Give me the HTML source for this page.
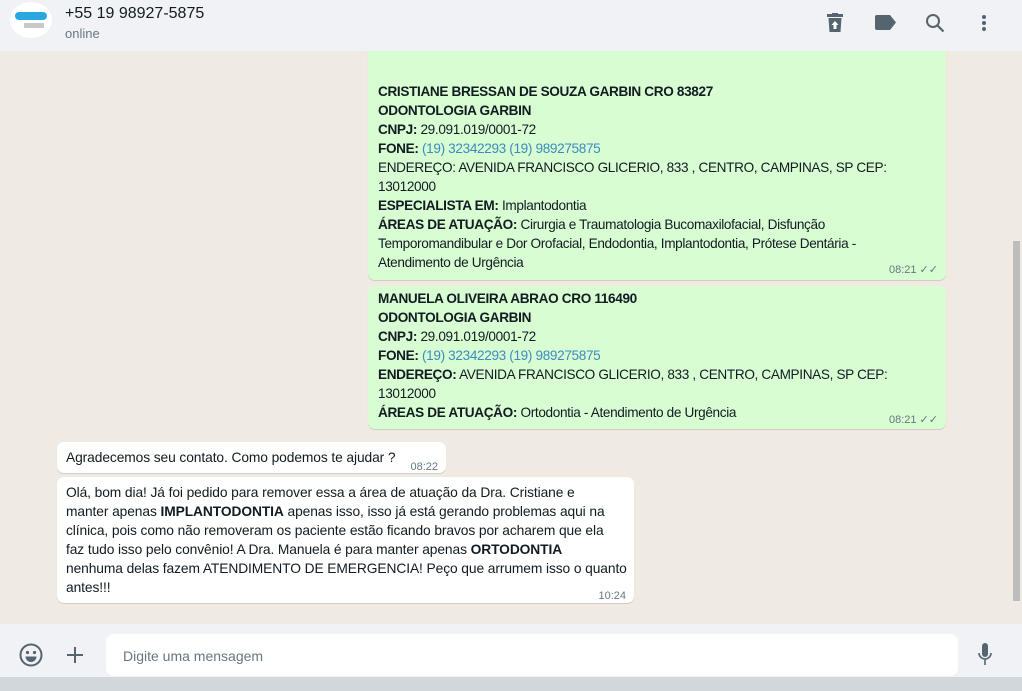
<!DOCTYPE html>
<html><head><meta charset="utf-8"><style>
*{margin:0;padding:0;box-sizing:border-box}
body{width:1022px;height:691px;overflow:hidden;font-family:"Liberation Sans",sans-serif;background:#efeae2;position:relative;color:#111b21}
.hdr{position:absolute;left:0;top:0;width:1022px;height:51px;background:#f0f2f5}
.av{position:absolute;left:10px;top:2px;width:42px;height:36px;border-radius:50%;background:#fff}
.av i{position:absolute;left:5px;top:10px;width:32px;height:8px;background:#2aa6e0;border-radius:4px}
.av s{position:absolute;left:14px;top:21px;width:20px;height:5px;background:#c8c8c8}
.name{position:absolute;left:65px;top:5px;font-size:16px;color:#111b21}
.st{position:absolute;left:65px;top:26px;font-size:13px;color:#667781}
.chat{position:absolute;left:0;top:51px;width:1012px;height:573px;overflow:hidden}
.sb{position:absolute;left:1012px;top:51px;width:10px;height:573px;background:#efeae2}
.sb i{position:absolute;left:1px;top:190px;width:7px;height:360px;background:#bdbdbd}
.b{position:absolute;font-size:14px;line-height:19px;border-radius:7px;box-shadow:0 1px .5px rgba(0,0,0,.13);padding:0 10px;white-space:nowrap}
.out{background:#d9fdd3;left:368px;width:578px;font-size:13.6px;letter-spacing:-0.35px}
.in{background:#fff;left:57px;font-size:13.8px;letter-spacing:-0.1px}
b{font-weight:bold}
.l{color:#3a8cbf}
.t{position:absolute;right:8px;font-size:11px;color:#667781;letter-spacing:0}
.ft{position:absolute;left:0;top:624px;width:1022px;height:53px;background:#f0f2f5}
.bot{position:absolute;left:0;top:677px;width:1022px;height:14px;background:#d1d7db}
.inp{position:absolute;left:106px;top:634px;width:852px;height:42px;background:#fff;border-radius:8px;font-size:14px;color:#667781;padding:14px 17px}
</style></head><body>
<div class="hdr">
<div class="av"><i></i><s></s></div>
<div class="name">+55 19 98927-5875</div>
<div class="st">online</div>
<svg style="position:absolute;left:827px;top:13px" width="16" height="20" viewBox="0 0 16 20"><rect x="0" y="1" width="16" height="3" fill="#54656f"/><rect x="5" y="0" width="6" height="2" fill="#54656f"/><path d="M1.5 5h13l-1 14h-11z" fill="#54656f"/><path d="M8 8l-3.5 4h2v4h3v-4h2z" fill="#fff"/></svg>
<svg style="position:absolute;left:875px;top:15px" width="21" height="15" viewBox="0 0 21 15"><path d="M2 0h13l6 7.5-6 7.5H2a2 2 0 01-2-2V2a2 2 0 012-2z" fill="#54656f"/></svg>
<svg style="position:absolute;left:925px;top:13px" width="20" height="20" viewBox="0 0 20 20"><circle cx="8" cy="8" r="6" fill="none" stroke="#54656f" stroke-width="2"/><path d="M12.5 12.5l6 6" stroke="#54656f" stroke-width="2.2"/></svg>
<svg style="position:absolute;left:981px;top:14px" width="6" height="18" viewBox="0 0 6 18"><circle cx="3" cy="3" r="2" fill="#54656f"/><circle cx="3" cy="9" r="2" fill="#54656f"/><circle cx="3" cy="15" r="2" fill="#54656f"/></svg>
</div>
<div class="chat">
<div class="b out" style="top:-10px;height:239px;padding-top:41px">
<b>CRISTIANE BRESSAN DE SOUZA GARBIN CRO 83827</b><br><b>ODONTOLOGIA GARBIN</b><br><b>CNPJ:</b> 29.091.019/0001-72<br><b>FONE:</b> <span class="l">(19) 32342293 (19) 989275875</span><br>ENDEREÇO: AVENIDA FRANCISCO GLICERIO, 833 , CENTRO, CAMPINAS, SP CEP:<br>13012000<br><b>ESPECIALISTA EM:</b> Implantodontia<br><b>ÁREAS DE ATUAÇÃO:</b> Cirurgia e Traumatologia Bucomaxilofacial, Disfunção<br>Temporomandibular e Dor Orofacial, Endodontia, Implantodontia, Prótese Dentária -<br>Atendimento de Urgência
<span class="t" style="top:220px">08:21 ✓✓</span></div>
<div class="b out" style="top:235px;height:143px;padding-top:3px">
<b>MANUELA OLIVEIRA ABRAO CRO 116490</b><br><b>ODONTOLOGIA GARBIN</b><br><b>CNPJ:</b> 29.091.019/0001-72<br><b>FONE:</b> <span class="l">(19) 32342293 (19) 989275875</span><br><b>ENDEREÇO:</b> AVENIDA FRANCISCO GLICERIO, 833 , CENTRO, CAMPINAS, SP CEP:<br>13012000<br><b>ÁREAS DE ATUAÇÃO:</b> Ortodontia - Atendimento de Urgência
<span class="t" style="top:125px">08:21 ✓✓</span></div>
<div class="b in" style="top:391px;width:389px;height:31px;padding-top:6px;padding-left:9px">Agradecemos seu contato. Como podemos te ajudar ?<span class="t" style="top:16px">08:22</span></div>
<div class="b in" style="top:426px;width:577px;height:126px;padding-top:6px;padding-left:9px">Olá, bom dia! Já foi pedido para remover essa a área de atuação da Dra. Cristiane e<br>manter apenas <b>IMPLANTODONTIA</b> apenas isso, isso já está gerando problemas aqui na<br>clínica, pois como não removeram os paciente estão ficando bravos por acharem que ela<br>faz tudo isso pelo convênio! A Dra. Manuela é para manter apenas <b>ORTODONTIA</b><br>nenhuma delas fazem ATENDIMENTO DE EMERGENCIA! Peço que arrumem isso o quanto<br>antes!!!<span class="t" style="top:110px">10:24</span></div>
</div>
<div class="sb"><i></i></div>
<div class="ft">
<svg style="position:absolute;left:19px;top:19px" width="24" height="24" viewBox="0 0 24 24"><circle cx="12" cy="12" r="10.5" fill="none" stroke="#54656f" stroke-width="2"/><circle cx="8.5" cy="9.5" r="1.6" fill="#54656f"/><circle cx="15.5" cy="9.5" r="1.6" fill="#54656f"/><path d="M6.5 13.5h11a5.5 5.5 0 01-11 0z" fill="#54656f"/></svg>
<svg style="position:absolute;left:66px;top:22px" width="18" height="18" viewBox="0 0 18 18"><path d="M9 1v16M1 9h16" stroke="#54656f" stroke-width="2"/></svg>
<svg style="position:absolute;left:977px;top:19px" width="16" height="25" viewBox="0 0 16 25"><rect x="5" y="0" width="6" height="14" rx="3" fill="#54656f"/><path d="M2 10a6 6 0 0012 0" fill="none" stroke="#54656f" stroke-width="1.6"/><path d="M8 16v6" stroke="#54656f" stroke-width="1.6"/></svg>
</div>
<div class="inp">Digite uma mensagem</div>
<div class="bot"></div>
</body></html>
